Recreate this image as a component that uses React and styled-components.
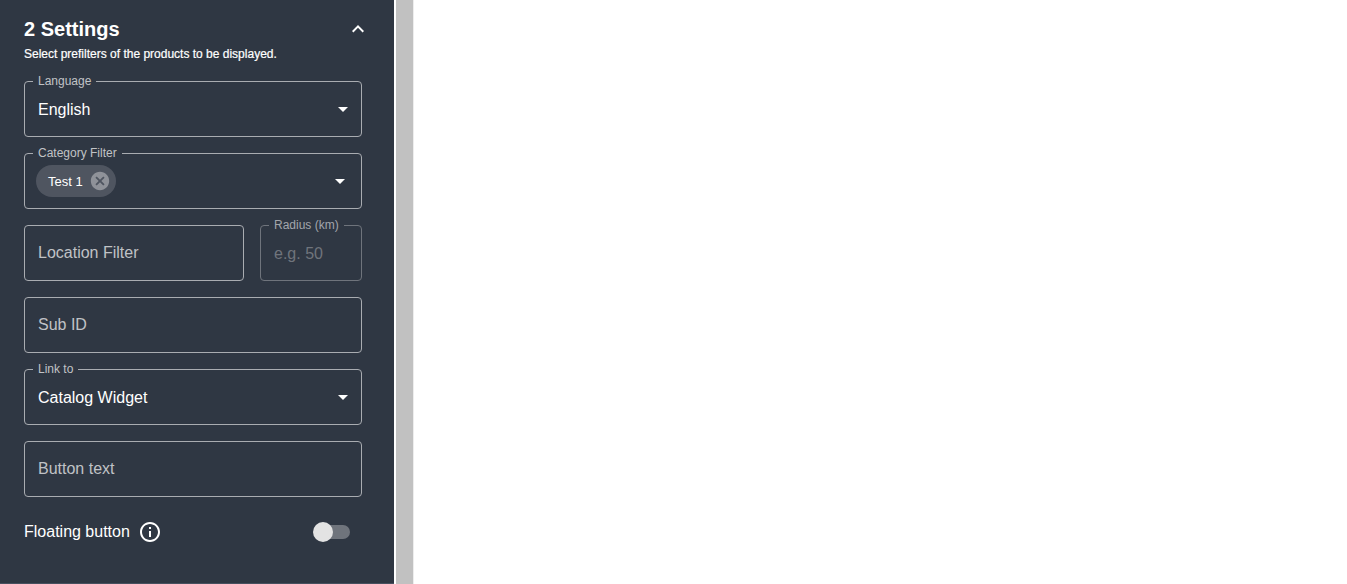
import styled, { createGlobalStyle } from "styled-components";

const GlobalStyle = createGlobalStyle`
  html, body {
    margin: 0;
    padding: 0;
    background: #fff;
    overflow: hidden;
  }
  * {
    box-sizing: border-box;
  }
`;

const Page = styled.div`
  display: flex;
  width: 1347px;
  height: 584px;
  font-family: "Liberation Sans", Arial, sans-serif;
  overflow: hidden;
`;

const Sidebar = styled.aside`
  width: 394px;
  height: 584px;
  background: #2f3743;
  border-bottom: 1px solid #46505e;
  padding: 16px 32px 0 24px;
  color: #fff;
  display: flex;
  flex-direction: column;
`;

const Divider = styled.div`
  width: 18px;
  height: 584px;
  margin-left: 2px;
  background: #c1c1c1;
  border-right: 1px solid #ededed;
`;

const Header = styled.div`
  display: flex;
  justify-content: space-between;
  align-items: center;
  height: 26px;
  margin-bottom: 4px;
`;

const Title = styled.h2`
  margin: 0;
  font-size: 20px;
  font-weight: 700;
  line-height: 26px;
`;

const Chevron = styled.svg`
  width: 24px;
  height: 24px;
  margin-right: -8px;
  fill: #fff;
`;

const Subtitle = styled.p`
  margin: 0 0 19px;
  font-size: 12px;
  font-weight: 400;
  line-height: 16px;
  -webkit-text-stroke: 0.2px #fff;
`;

const Fields = styled.div`
  display: flex;
  flex-direction: column;
  gap: 16px;
`;

const Row = styled.div`
  display: flex;
  gap: 16px;
`;

const Field = styled.div`
  position: relative;
  padding: 0 13px;
  flex: ${(p) => p.$flex || "none"};
  width: ${(p) => p.$width || "100%"};
  height: 56px;
  min-width: 0;
  border: 1px solid ${(p) => (p.$dim ? "#6f747c" : "#a9acb1")};
  border-radius: 4px;
  display: flex;
  align-items: center;
  justify-content: space-between;
`;

const Legend = styled.span`
  position: absolute;
  top: -8px;
  left: 8px;
  padding: 0 5px;
  background: #2f3743;
  color: ${(p) => (p.$dim ? "#a3a6ac" : "#c1c3c6")};
  font-size: 12px;
  line-height: 15px;
  white-space: nowrap;
`;

const Value = styled.span`
  font-size: 16px;
  line-height: 24px;
  padding-top: ${(p) => (p.$low ? "2px" : "0")};
  color: ${(p) => p.$color || "#fff"};
`;

const Caret = styled.svg`
  width: 24px;
  height: 24px;
  margin-right: ${(p) => p.$inset || "-7px"};
  fill: #fff;
`;

const Chip = styled.div`
  display: flex;
  align-items: center;
  height: 32px;
  margin-left: -2px;
  padding: 0 5px 0 12px;
  gap: 6px;
  border-radius: 16px;
  background: #4f5560;
  font-size: 13px;
  color: #fff;
`;

const ChipClose = styled.svg`
  width: 22px;
  height: 22px;
  fill: #8f9299;
`;

const Toggle = styled.div`
  display: flex;
  justify-content: space-between;
  align-items: center;
  margin-top: 16px;
  height: 38px;
`;

const ToggleLabel = styled.div`
  display: flex;
  align-items: center;
  gap: 8px;
  font-size: 16px;
`;

const InfoIcon = styled.svg`
  width: 24px;
  height: 24px;
  fill: #fff;
`;

const Track = styled.div`
  position: relative;
  width: 34px;
  height: 14px;
  margin-right: 12px;
  border-radius: 7px;
  background: #6f747c;
`;

const Thumb = styled.span`
  position: absolute;
  top: -3px;
  left: -3px;
  width: 20px;
  height: 20px;
  border-radius: 50%;
  background: #e3e3e3;
`;

const DropArrow = ({ inset }) => (
  <Caret viewBox="0 0 24 24" $inset={inset}>
    <path d="M7 10l5 5 5-5z" />
  </Caret>
);

const App = () => {
  return (
    <Page>
      <GlobalStyle />
      <Sidebar>
        <Header>
          <Title>2 Settings</Title>
          <Chevron viewBox="0 0 24 24">
            <path d="M12 8l-6 6 1.41 1.41L12 10.83l4.59 4.58L18 14z" />
          </Chevron>
        </Header>
        <Subtitle>Select prefilters of the products to be displayed.</Subtitle>
        <Fields>
          <Field>
            <Legend>Language</Legend>
            <Value $low>English</Value>
            <DropArrow />
          </Field>
          <Field>
            <Legend>Category Filter</Legend>
            <Chip>
              Test 1
              <ChipClose viewBox="0 0 24 24">
                <path d="M12 2C6.47 2 2 6.47 2 12s4.47 10 10 10 10-4.47 10-10S17.53 2 12 2zm5 13.59L15.59 17 12 13.41 8.41 17 7 15.59 10.59 12 7 8.41 8.41 7 12 10.59 15.59 7 17 8.41 13.41 12 17 15.59z" />
              </ChipClose>
            </Chip>
            <DropArrow inset="-4px" />
          </Field>
          <Row>
            <Field $flex="1">
              <Value $color="#c0c2c6">Location Filter</Value>
            </Field>
            <Field $width="102px" $dim>
              <Legend $dim>Radius (km)</Legend>
              <Value $color="#6f747c" $low>e.g. 50</Value>
            </Field>
          </Row>
          <Field>
            <Value $color="#c0c2c6">Sub ID</Value>
          </Field>
          <Field>
            <Legend>Link to</Legend>
            <Value $low>Catalog Widget</Value>
            <DropArrow />
          </Field>
          <Field>
            <Value $color="#c0c2c6">Button text</Value>
          </Field>
        </Fields>
        <Toggle>
          <ToggleLabel>
            Floating button
            <InfoIcon viewBox="0 0 24 24">
              <path d="M11 7h2v2h-2zm0 4h2v6h-2zm1-9C6.48 2 2 6.48 2 12s4.48 10 10 10 10-4.48 10-10S17.52 2 12 2zm0 18c-4.41 0-8-3.59-8-8s3.59-8 8-8 8 3.59 8 8-3.59 8-8 8z" />
            </InfoIcon>
          </ToggleLabel>
          <Track>
            <Thumb />
          </Track>
        </Toggle>
      </Sidebar>
      <Divider />
    </Page>
  );
};

export default App;
